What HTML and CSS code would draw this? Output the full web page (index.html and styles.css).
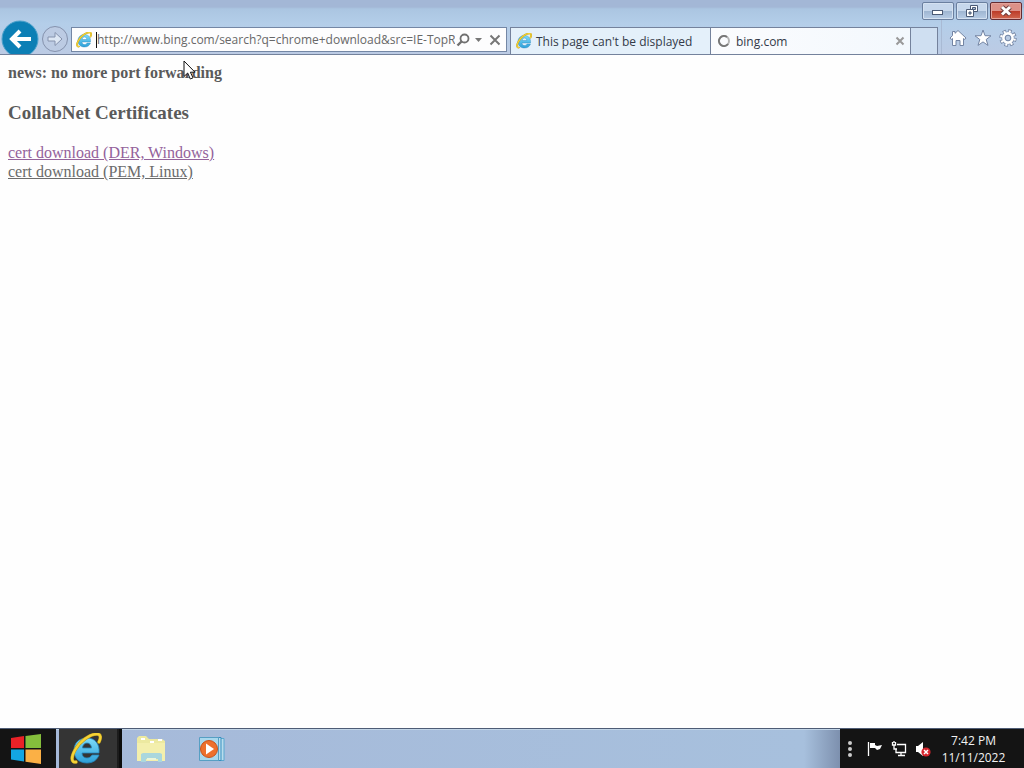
FILE: index.html
```
<!DOCTYPE html>
<html lang="en">
<head>
  <meta charset="UTF-8">
  <title>bing.com</title>
  <link rel="stylesheet" href="styles.css">
</head>
<body>
<svg class="defs" width="0" height="0" aria-hidden="true">
  <linearGradient id="ie-blue" x1="0" y1="0" x2="0" y2="1">
    <stop offset="0" stop-color="#7fdcfa"/>
    <stop offset="1" stop-color="#2c9fd8"/>
  </linearGradient>
  <symbol id="ie" viewBox="0 0 32 32">
    <path d="M29 20H12c0 3 2 5 5 5 2 0 4-1 5-3h7c-2 5-6 8-12 8C9 30 4 25 4 17.500S9 5 17 5s13 6 12 15zM12.500 15h9c0-3-2-5-4.500-5s-4.500 2-4.500 5z" fill="url(#ie-blue)" stroke="#2586bd" stroke-width=".8" fill-rule="evenodd"/>
    <path d="M6 29c-5 1-5-5-1-12C10 8 20 1 27 1c4 0 4 4 2 8" fill="none" stroke="#b99a20" stroke-width="3.400" stroke-linecap="round"/>
    <path d="M6 29c-5 1-5-5-1-12C10 8 20 1 27 1c4 0 4 4 2 8" fill="none" stroke="#f6d335" stroke-width="2.400" stroke-linecap="round"/>
  </symbol>
</svg>

<div class="desktop">
  <header class="chrome">
    <div class="caption">
      <button class="caption-btn" aria-label="Minimize">
        <svg width="14" height="12" viewBox="0 0 14 12"><rect x="1.500" y="5.500" width="10" height="4" fill="#fff" stroke="#4b5a75"/></svg>
      </button>
      <button class="caption-btn" aria-label="Restore">
        <svg width="14" height="12" viewBox="0 0 14 12" fill="#fff" stroke="#4b5a75"><path d="M5.500.500h7v6h-7z"/><path d="M7.500 2.500h3v2h-3z" fill="#a9bcd6"/><path d="M1.500 4.500h7v7h-7z"/><path d="M4 7h2v2H4z" fill="#a9bcd6"/></svg>
      </button>
      <button class="caption-btn close" aria-label="Close">
        <svg width="14" height="12" viewBox="0 0 14 12"><path d="M3 2l8 7.500M11 2L3 9.500" stroke="#6b3b3b" stroke-width="5"/><path d="M3 2l8 7.500M11 2L3 9.500" stroke="#fff" stroke-width="3"/></svg>
      </button>
    </div>
    <div class="toolbar">
      <button class="back" aria-label="Back">
        <svg width="38" height="38" viewBox="0 0 38 38"><circle cx="19" cy="19" r="18" fill="#0c7fb5" stroke="#4fa3cc"/><path d="M30 19H11m8-8l-8 8 8 8" fill="none" stroke="#fff" stroke-width="4"/></svg>
      </button>
      <button class="forward" aria-label="Forward">
        <svg width="28" height="28" viewBox="0 0 28 28"><circle cx="14" cy="14" r="12.500" fill="#bccbe3" stroke="#8592ad"/><path d="M7 12h7V7.500l7 6.500-7 6.500V16H7z" fill="#dde7f4" stroke="#8592ad"/></svg>
      </button>
      <div class="address">
        <svg class="favicon" width="16" height="16"><use href="#ie"/></svg>
        <span class="caret"></span>
        <input class="url" type="text" aria-label="Address" value="http://www.bing.com/search?q=chrome+download&amp;src=IE-TopResult">
        <button class="small-btn" aria-label="Search">
          <svg width="14" height="14" viewBox="0 0 14 14" fill="none" stroke="#707070"><circle cx="8.500" cy="5.500" r="4" stroke-width="1.800"/><path d="M5.500 8.500l-4 4" stroke-width="2.400"/></svg>
        </button>
        <button class="small-btn" aria-label="Show address bar suggestions">
          <svg width="8" height="6" viewBox="0 0 8 6"><path d="M0 1h7L3.500 5z" fill="#777"/></svg>
        </button>
        <button class="small-btn stop" aria-label="Stop">
          <svg width="12" height="12" viewBox="0 0 12 12"><path d="M1.500 1.500l9 9m0-9l-9 9" stroke="#777" stroke-width="2"/></svg>
        </button>
      </div>
      <div class="tabs">
        <button class="tab">
          <svg class="favicon" width="16" height="16"><use href="#ie"/></svg>
          <span class="tab-title">This page can't be displayed</span>
        </button>
        <div class="tab active">
          <svg class="favicon" width="16" height="16" viewBox="0 0 16 16"><circle cx="8" cy="8" r="5" fill="none" stroke="#b5b5b5" stroke-width="2"/><path d="M11 4a5 5 0 1 0 1 7" fill="none" stroke="#777" stroke-width="2"/></svg>
          <span class="tab-title">bing.com</span>
          <button class="small-btn" aria-label="Close tab">
            <svg width="10" height="10" viewBox="0 0 10 10"><path d="M1.500 1.500l7 7m0-7l-7 7" stroke="#999" stroke-width="2"/></svg>
          </button>
        </div>
        <button class="tab new-tab" aria-label="New tab"></button>
      </div>
      <div class="tools">
        <button class="tool" aria-label="Home">
          <svg width="18" height="18" viewBox="0 0 18 18"><path d="M9 1.500l8 7.500-1.200 1.500-1.300-1V16.500H11v-5H7v5H3.500v-7l-1.300 1L1 9l2.500-2.400V2.500H6v1.800z" fill="#fff" stroke="#7384a3"/></svg>
        </button>
        <button class="tool" aria-label="Favorites">
          <svg width="18" height="18" viewBox="0 0 18 18"><path d="M9 1l2 5.700 6 .1-4.800 3.700 1.800 5.900L9 12.900l-5 3.500 1.800-5.900L1 6.800l6-.1z" fill="#fff" stroke="#7384a3"/></svg>
        </button>
        <button class="tool" aria-label="Tools">
          <svg width="18" height="18" viewBox="0 0 18 18"><circle cx="9" cy="9" r="6.700" fill="none" stroke="#7384a3" stroke-width="4" stroke-dasharray="3.200 2.062"/><circle cx="9" cy="9" r="5.600" fill="none" stroke="#7384a3" stroke-width="2"/><circle cx="9" cy="9" r="6.700" fill="none" stroke="#fff" stroke-width="2.400" stroke-dasharray="2 3.262" stroke-dashoffset="-.6"/><circle cx="9" cy="9" r="4.600" fill="none" stroke="#fff" stroke-width="2.600"/><circle cx="9" cy="9" r="2.800" fill="#b9cbe3" stroke="#7384a3"/></svg>
        </button>
      </div>
    </div>
  </header>

  <main class="page">
    <h4>news: no more port forwarding</h4>
    <h3>CollabNet Certificates</h3>
    <a class="visited" href="#der">cert download (DER, Windows)</a><br>
    <a href="#pem">cert download (PEM, Linux)</a>
  </main>

  <footer class="taskbar">
    <button class="start" aria-label="Start">
      <svg width="32" height="32" viewBox="0 0 32 32"><path d="M1 5l13-2v12H1z" fill="#ea2227"/><path d="M15.500 3L31 1v14H15.500z" fill="#85bf3c"/><path d="M1 16.500h13v12L1 26.500z" fill="#13a5e2"/><path d="M15.500 16.500H31V31l-15.500-2.300z" fill="#fbb045"/></svg>
    </button>
    <button class="task running" aria-label="Internet Explorer">
      <svg width="32" height="32"><use href="#ie"/></svg>
    </button>
    <button class="task" aria-label="File Explorer">
      <svg width="30" height="28" viewBox="0 0 30 28"><path d="M1 3l2-2h7l3 3h13l3 2v20H1z" fill="#ece9a0"/><path d="M1 8h28v18H1z" fill="#f3efad"/><path d="M5 4h4m5 3h4m4-2h4" stroke="#fff" stroke-width="2"/><path d="M5 27v-8l2-1h17l2 1v8h-4v-3H10v3z" fill="#aad7dd"/><path d="M11 24h9" stroke="#eaf5da" stroke-width="2"/></svg>
    </button>
    <button class="task" aria-label="Media Player">
      <svg width="30" height="28" viewBox="0 0 30 28"><path d="M8 3.500h19v22H8z" fill="#b9dcec" stroke="#5ba8cf"/><path d="M5 2.500h19v23H5z" fill="#b9dcec" stroke="#368fc0"/><path d="M2.500 2.500h19v23h-19z" fill="#a9d8ed" stroke="#579fc3"/><circle cx="12" cy="14" r="8.500" fill="#ed702d" stroke="#c9531b"/><path d="M9 8.500l8 5.500-8 5.500z" fill="#fff"/></svg>
    </button>
    <div class="tray">
      <button class="tray-btn" aria-label="Show hidden icons">
        <svg width="6" height="18" viewBox="0 0 6 18" fill="#ccc"><circle cx="3" cy="3" r="2"/><circle cx="3" cy="9" r="2"/><circle cx="3" cy="15" r="2"/></svg>
      </button>
      <button class="tray-btn" aria-label="Action Center">
        <svg width="16" height="16" viewBox="0 0 16 16"><path d="M1.500 1v14" stroke="#fff" stroke-width="1.300"/><path d="M3 2h5v2l2 1 5-1-2 4-3 1-2-2H3z" fill="#fff"/></svg>
      </button>
      <button class="tray-btn" aria-label="Network">
        <svg width="16" height="16" viewBox="0 0 16 16" fill="none" stroke="#fff" stroke-width="1.300"><path d="M6 3.500h8.500v8H5V8M7 14.500h7M10 12v2M1.500 1v3h3V1M3 4v4h3M3 0v2"/></svg>
      </button>
      <button class="tray-btn" aria-label="Volume muted">
        <svg width="16" height="16" viewBox="0 0 16 16"><path d="M1 5h2l5-4v14l-5-4H1z" fill="#fff"/><circle cx="11" cy="11" r="4.600" fill="#d6242c"/><path d="M9 9l4 4m0-4l-4 4" stroke="#fff" stroke-width="1.500"/></svg>
      </button>
      <button class="clock"><span>7:42 PM</span><span>11/11/2022</span></button>
    </div>
  </footer>
</div>

<svg class="cursor" width="14" height="21" viewBox="0 0 14 21"><path d="M1 1v15.500l3.700-3.500 2.600 6 2.700-1.200-2.600-5.600H12z" fill="#fff" stroke="#111"/></svg>
</body>
</html>
```
FILE: styles.css
```
* {
  box-sizing: border-box;
}
body {
  margin: 0;
  font-family: "Open Sans", "Noto Sans", sans-serif;
  font-size: 12px;
}
button {
  display: flex;
  align-items: center;
  justify-content: center;
  margin: 0;
  padding: 0;
  border: 0;
  background: none;
  font: inherit;
  color: inherit;
}
svg {
  display: block;
  flex: none;
}
.defs {
  position: absolute;
}
.desktop {
  display: flex;
  flex-direction: column;
  height: 100vh;
}

/* browser frame */
.chrome {
  flex: none;
  border-bottom: 1px solid #74829c;
  background: linear-gradient(#a3b7d6 0, #a3b7d6 7px, #abc6e2 9px, #b4cee9 24px, #bccbe4 54px);
}
.caption {
  display: flex;
  justify-content: flex-end;
  align-items: flex-end;
  gap: 2px;
  height: 20px;
  padding-right: 2px;
}
.caption-btn {
  width: 32px;
  height: 18px;
  border: 1px solid #6a7f9f;
  border-radius: 2px;
  background: linear-gradient(#c6d7ec 50%, #9eb5d1 50%, #b8cde6);
  box-shadow: inset 0 0 0 1px #d4e1f1;
}
.caption-btn.close {
  border-color: #642b31;
  background: linear-gradient(#dc9188 50%, #bb3a28 50%, #d0674f);
  box-shadow: inset 0 0 0 1px #e2a39b;
}
.toolbar {
  display: flex;
  height: 34px;
  overflow: hidden;
}
.back {
  width: 40px;
  height: 38px;
}
.forward {
  width: 30px;
  height: 38px;
}
.address {
  display: flex;
  align-items: center;
  flex: 1;
  min-width: 0;
  height: 25px;
  margin: 7px 3px 0 1px;
  padding-left: 4px;
  border: 1px solid #7487a5;
  background: #fdfdfe;
}
.caret {
  width: 1px;
  height: 16px;
  margin-left: 4px;
  background: #111;
}
.url {
  flex: 1;
  min-width: 0;
  padding: 0;
  border: 0;
  outline: 0;
  background: none;
  font: inherit;
  color: #686868;
}
.small-btn {
  width: 16px;
  height: 16px;
}
.address .small-btn {
  width: 16px;
}
.address .stop {
  margin-right: 3px;
}
.tabs {
  display: flex;
  margin-top: 7px;
  border-top: 1px solid #74829c;
  border-left: 1px solid #74829c;
}
.tab {
  display: flex;
  align-items: center;
  justify-content: flex-start;
  gap: 4px;
  width: 200px;
  padding: 0 2px 0 5px;
  border-right: 1px solid #74829c;
  background: #e4f0fa;
  color: #333a48;
}
.tab.active {
  background: linear-gradient(90deg, #fbfcfe, #f3f8fd);
}
.tab-title {
  flex: 1;
  text-align: left;
  white-space: nowrap;
}
.new-tab {
  width: 27px;
  background: #cfdff1;
}
.tools {
  display: flex;
  align-items: center;
  gap: 6px;
  margin-left: 3px;
  padding: 2px 7px 0 6px;
  border-left: 1px solid #a9bad4;
}
.tool {
  width: 19px;
  height: 20px;
}

/* document */
.page {
  flex: 1;
  min-height: 0;
  overflow: hidden;
  padding: 8px;
  background: #fefefe;
  font: 16px/19px "Liberation Serif", "Times New Roman", serif;
  color: #5a5a5a;
}
.page h4 {
  margin: 0 0 21px;
  font-size: 16px;
}
.page h3 {
  margin: 0 0 20px;
  font-size: 19px;
  line-height: 20px;
}
.page a {
  color: #6b6b6b;
}
.page a.visited {
  color: #94629b;
}

/* taskbar */
.taskbar {
  display: flex;
  flex: none;
  height: 40px;
  border-top: 1px solid #4e5c75;
  background: linear-gradient(90deg, #a6b9d9 0, #a7c0dd calc(100% - 220px), #7d90ae calc(100% - 184px));
  box-shadow: inset 0 1px #c3d6e8;
}
.start {
  width: 56px;
  padding-right: 4px;
  background: #141414;
}
.task {
  width: 60px;
}
.task.running {
  width: 63px;
  margin-left: 3px;
  padding-right: 6px;
  border-right: 3px solid #0d0d0d;
  background: #343434;
  box-shadow: inset -2px 0 #1c1c1c;
}
.task.running + .task {
  width: 58px;
  margin-right: 2px;
}
.tray {
  display: flex;
  align-items: center;
  gap: 8px;
  width: 184px;
  margin-left: auto;
  padding-left: 7px;
  background: #141414;
  color: #f2f2f2;
}
.tray-btn:first-child {
  margin-right: 6px;
}
.clock {
  flex: 1;
  flex-direction: column;
  padding-right: 16px;
  line-height: 17px;
}

.cursor {
  position: absolute;
  left: 183px;
  top: 60px;
}
```
